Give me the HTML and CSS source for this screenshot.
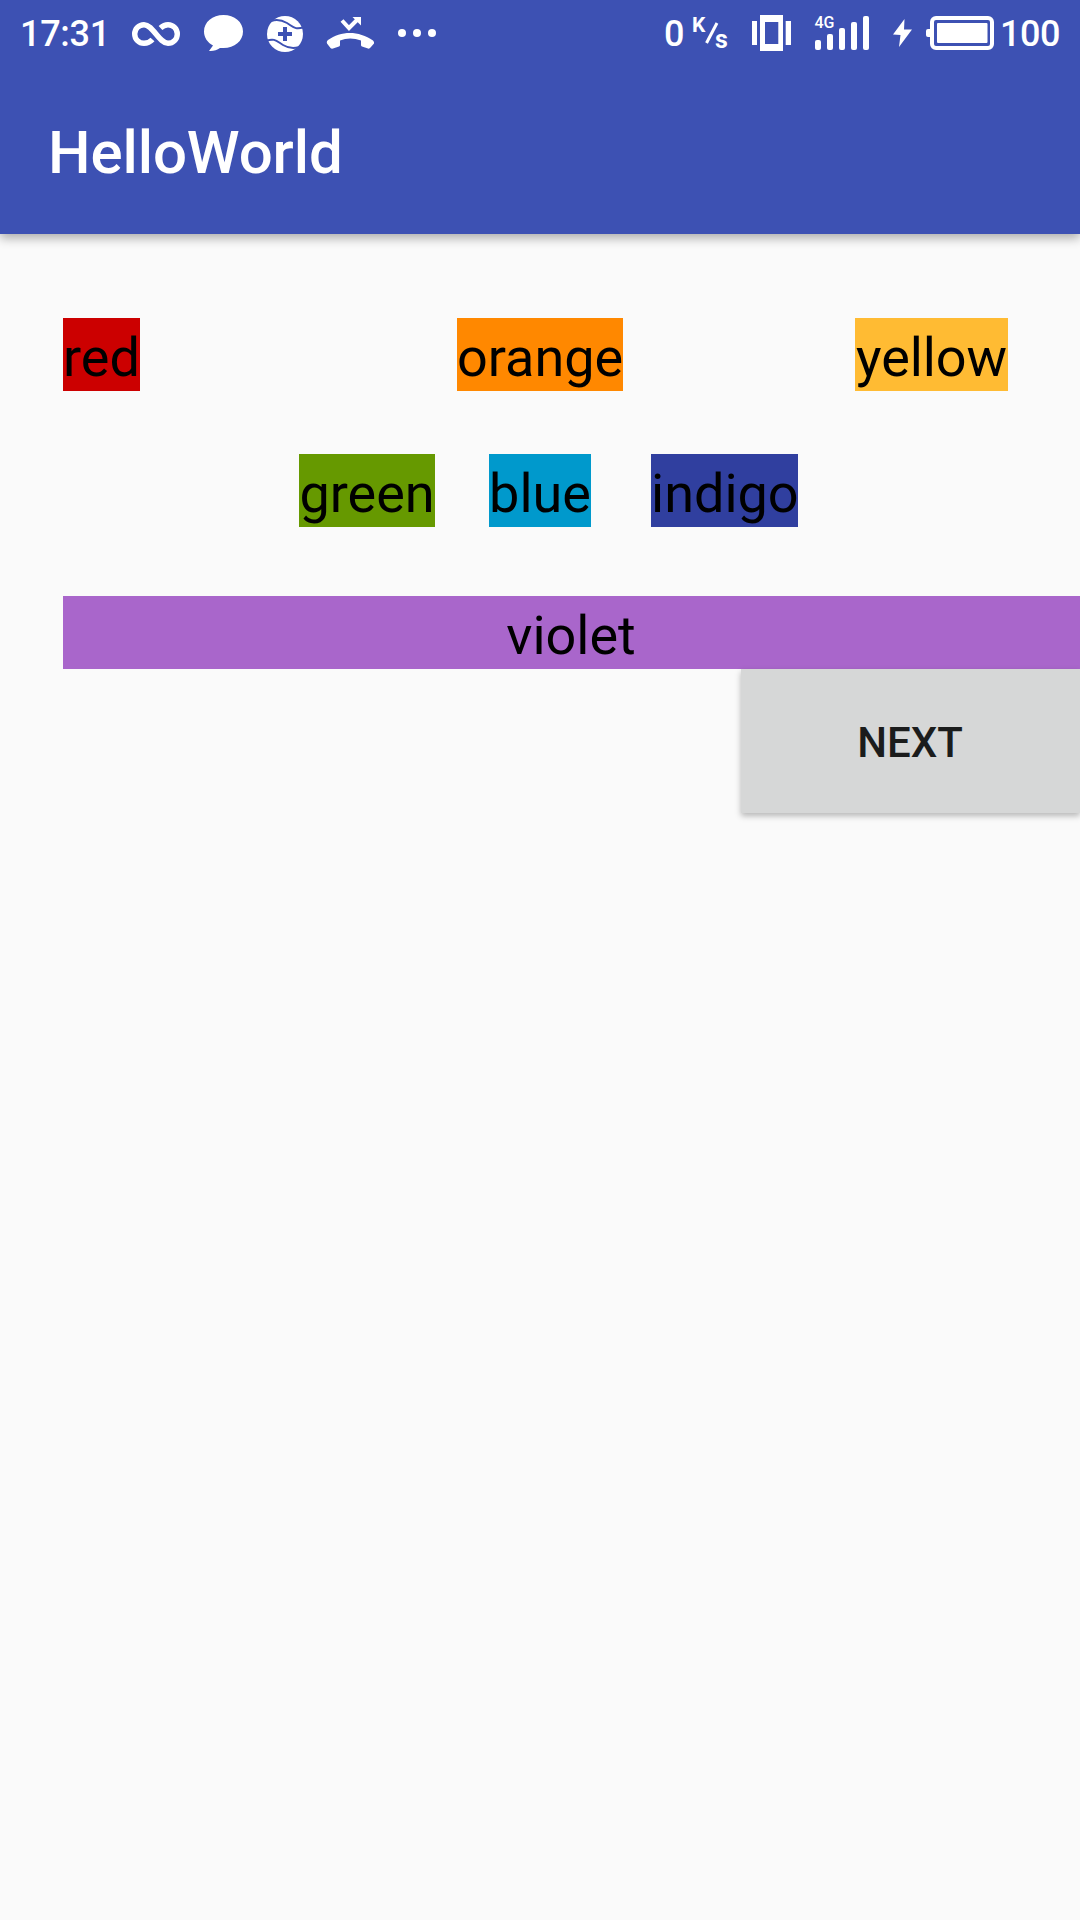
FILE: index.html
```html
<!DOCTYPE html>
<html lang="en">
<head>
<meta charset="utf-8">
<title>HelloWorld</title>
<link rel="stylesheet" href="styles.css">
</head>
<body>
<header class="header">
  <div class="status">
    <div class="status-left">
      <span class="time">17:31</span>
      <svg width="60" height="72" viewBox="126 0 60 72"><path d="M152.500 39.500Q149 43.300 144 43.300A9.300 9.300 0 1 1 144 24.700C153 24.700 159 43.300 168 43.300A9.300 9.300 0 1 0 168 24.700Q164 24.700 160.500 28" fill="none" stroke="#fff" stroke-width="5.400"/></svg>
      <svg width="64" height="72" viewBox="186 0 64 72"><path d="M223.500 15C234.500 15 243 22 243 31.500S234.500 48 223.500 48H220C217 50 213 51.500 209 51L213 45.500C207.500 42.500 204 37.500 204 31.500C204 22 212.500 15 223.500 15Z" fill="#fff"/></svg>
      <svg width="70" height="72" viewBox="250 0 70 72"><circle cx="285" cy="34" r="18" fill="#fff"/><path d="M266 24C273 18.500 281 19.500 287 23S295 30.500 304 27" class="cut"/><path d="M304 44C297 49.500 289 48.500 283 45S275 37.500 266 41" class="cut"/><path d="M285 27V41M278 34H292" class="plus"/></svg>
      <svg width="64" height="72" viewBox="320 0 64 72"><path d="M342 20.500L349 28L358 19" fill="none" stroke="#fff" stroke-width="4"/><path d="M352.500 17H361V25.500Z" fill="#fff"/><path d="M327 43.500C326.500 42 327 41 328 40C341 30.500 359 30.500 373 40.500Q374.500 42 374 43.500L370.500 47.500Q369.500 49 368 48.500L362 46.500Q361 46 361 45V40.500Q350 36.500 340 40.500V45Q340 46 339 46.500L333 48.500Q331.500 49 330.500 48Z" fill="#fff"/></svg>
      <svg width="60" height="72" viewBox="384 0 60 72"><g fill="#fff"><circle cx="402" cy="33" r="4"/><circle cx="417" cy="33" r="4"/><circle cx="432" cy="33" r="4"/></g></svg>
    </div>
    <div class="status-right">
      <span class="speed">0</span>
      <svg width="50" height="72" viewBox="690 0 50 72"><text x="692" y="32" class="unit">K</text><path d="M706.500 43L717 23" stroke="#fff" stroke-width="3"/><text x="715" y="48" class="unit unit-s">s</text></svg>
      <svg width="60" height="72" viewBox="740 0 60 72"><path d="M752 21H757V45H752ZM785.700 21H791V45H785.700ZM760 15H783V51H760ZM765 22V44H778.300V22Z" fill="#fff" fill-rule="evenodd"/></svg>
      <svg width="80" height="72" viewBox="800 0 80 72"><text x="814.500" y="28" class="network">4G</text><g fill="#fff"><rect x="815" y="40" width="6" height="10" rx="2"/><rect x="827" y="34" width="6" height="16" rx="2"/><rect x="839" y="28" width="6" height="22" rx="2"/><rect x="851" y="22" width="6" height="28" rx="2"/><rect x="863" y="16" width="6" height="34" rx="2"/></g></svg>
      <svg width="38" height="72" viewBox="880 0 38 72"><path d="M904.500 19L893 34.500L900.500 35L899 47L912 29.500L904 29.500Z" fill="#fff"/></svg>
      <svg width="82" height="72" viewBox="918 0 82 72"><rect x="932" y="18" width="60" height="30" rx="4" fill="none" stroke="#fff" stroke-width="4"/><path d="M930 29H928Q926 29 926 31V35Q926 37 928 37H930Z" fill="#fff"/><rect x="937" y="23" width="50.500" height="20" rx="1" fill="#fff"/></svg>
      <span class="level">100</span>
    </div>
  </div>
  <h1 class="title">HelloWorld</h1>
</header>
<main class="content">
  <div class="row row-spread">
    <span class="label red">red</span>
    <span class="label orange">orange</span>
    <span class="label yellow">yellow</span>
  </div>
  <div class="row row-center">
    <span class="label green">green</span>
    <span class="label blue">blue</span>
    <span class="label indigo">indigo</span>
  </div>
  <div class="label violet">violet</div>
  <button class="next" type="button">NEXT</button>
</main>
</body>
</html>
```
FILE: styles.css
```css
* { box-sizing: border-box; }
body {
  margin: 0;
  height: 1920px;
  overflow: hidden;
  background: #fafafa;
  color: #000;
  font-family: Roboto, sans-serif;
}
.header {
  height: 234px;
  background: #3d51b3;
  color: #fff;
  box-shadow: 0 4px 10px rgba(0, 0, 0, .32);
}
.status {
  display: flex;
  justify-content: space-between;
  height: 72px;
  font-size: 36px;
  font-weight: 500;
  line-height: 68px;
}
.status svg { display: block; flex: none; }
.status-left, .status-right { display: flex; }
.time { width: 126px; padding-left: 20px; letter-spacing: -.3px; }
.speed { width: 26px; }
.level { width: 80px; letter-spacing: -.4px; }
.cut { fill: none; stroke: #3d51b3; stroke-width: 2; }
.plus { fill: none; stroke: #3d51b3; stroke-width: 4; }
.unit { fill: #fff; font-size: 21px; font-weight: 700; }
.unit-s { font-size: 25px; }
.network { fill: #fff; font-size: 16px; font-weight: 500; }
.title {
  margin: 0;
  padding: 45px 48px 0;
  font-size: 60px;
  font-weight: 500;
  line-height: 72px;
  letter-spacing: -.1px;
}
.content {
  display: flex;
  flex-direction: column;
  padding: 84px 0 0 63px;
}
.row { display: flex; height: 73px; }
.row-spread { justify-content: space-between; padding-right: 72px; }
.row-center { margin: 63px 0 69px; padding-left: 236px; }
.label {
  height: 73px;
  padding-top: 6px;
  font-size: 54px;
  line-height: 67px;
  text-align: center;
  white-space: nowrap;
}
.red { width: 77px; background: #cc0000; }
.orange { width: 166px; margin-left: 85px; background: #ff8800; }
.yellow { width: 153px; background: #ffbb33; letter-spacing: -.1px; }
.green { width: 136px; background: #669900; }
.blue { width: 102px; margin-left: 54px; background: #0099cc; }
.indigo { width: 147px; margin-left: 60px; background: #303f9f; }
.violet { padding-right: 1px; background: #a966cb; }
.next {
  align-self: flex-end;
  width: 339px;
  height: 144px;
  padding: 4px 1px 0 0;
  border: 0;
  background: #d6d7d7;
  color: #1b1c1c;
  font: 500 42px/50px Roboto, sans-serif;
  box-shadow: 0 3px 6px rgba(0, 0, 0, .27);
}
```
